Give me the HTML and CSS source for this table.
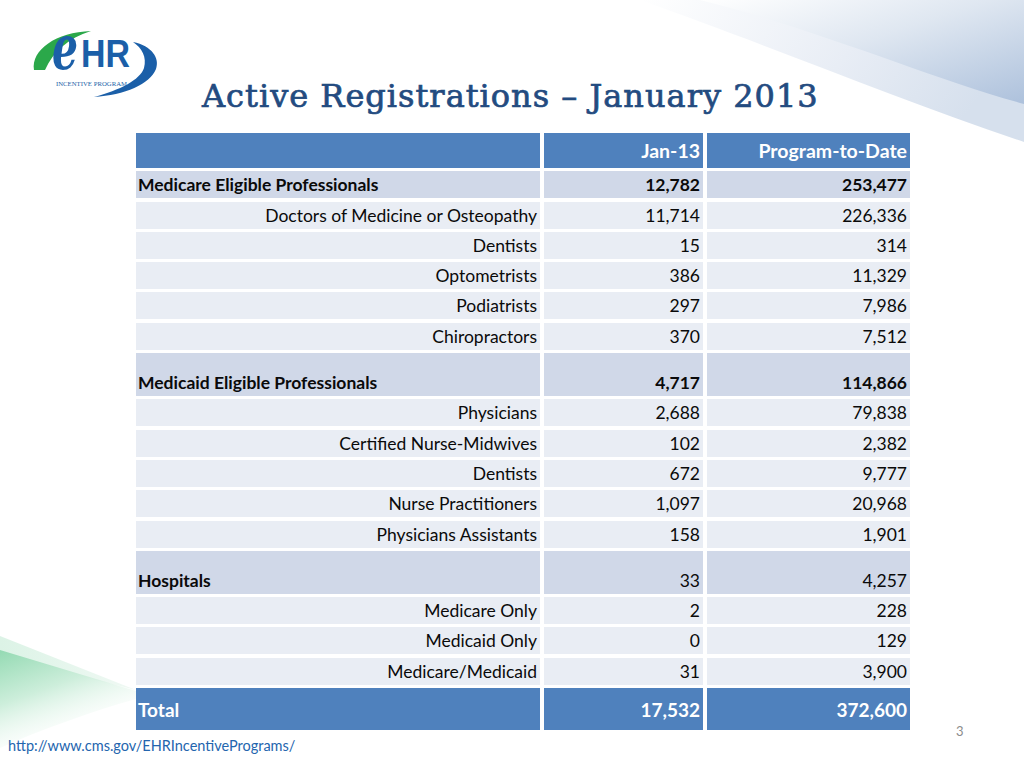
FILE: index.html
```html
<!DOCTYPE html>
<html lang="en">
<head>
<meta charset="utf-8">
<title>Active Registrations – January 2013</title>
<link rel="stylesheet" href="styles.css">
</head>
<body>
<div class="slide">
  <svg class="bg" width="1024" height="768" viewBox="0 0 1024 768" aria-hidden="true">
    <defs>
      <linearGradient id="sw1" x1="0" y1="0" x2="1" y2="0.3">
        <stop offset="0" stop-color="#ffffff"/>
        <stop offset="0.6" stop-color="#e8edf5"/>
        <stop offset="1" stop-color="#d6e0ed"/>
      </linearGradient>
      <linearGradient id="sw2" x1="0" y1="0" x2="1" y2="1">
        <stop offset="0" stop-color="#ffffff"/>
        <stop offset="0.45" stop-color="#dfe7f1"/>
        <stop offset="1" stop-color="#adc1dc"/>
      </linearGradient>
      <linearGradient id="gr1" x1="0" y1="0" x2="0.5" y2="1">
        <stop offset="0" stop-color="#94dab3"/>
        <stop offset="0.45" stop-color="#cdeedb"/>
        <stop offset="1" stop-color="#ffffff" stop-opacity="0"/>
      </linearGradient>
      <linearGradient id="gr2" x1="0" y1="0" x2="1" y2="0">
        <stop offset="0" stop-color="#dcf3e6"/>
        <stop offset="1" stop-color="#f0f9f4"/>
      </linearGradient>
    </defs>
    <path d="M640 0 C760 42 900 100 1024 142 L1024 0 Z" fill="url(#sw1)"/>
    <path d="M700 0 C820 30 930 78 1024 104 L1024 0 Z" fill="url(#sw2)"/>
    <path d="M0 636 L136 690 L0 656 Z" fill="url(#gr2)"/>
    <path d="M0 650 L136 691 L136 699 C90 712 40 730 0 748 Z" fill="url(#gr1)"/>
  </svg>

  <header class="top">
    <svg class="logo" width="140" height="106" viewBox="28 0 140 106" role="img" aria-label="eHR Incentive Program">
      <path d="M34 70 C31 50 56 32 91 31 C68 38 53 52 45 70 Z" fill="#2ba84a"/>
      <path d="M133 42 C152 46 160 58 156 69 C150 84 125 95 94 97 C120 90 140 80 144 68 C147 57 142 48 133 42 Z" fill="#1b5fa8"/>
      <text x="52" y="69" class="logo-e" textLength="26" lengthAdjust="spacingAndGlyphs">e</text>
      <text x="81" y="67" class="logo-hr" textLength="49" lengthAdjust="spacingAndGlyphs">HR</text>
      <text x="56" y="86" class="logo-sub" textLength="71" lengthAdjust="spacingAndGlyphs">INCENTIVE PROGRAM</text>
    </svg>
    <h1 class="title">Active Registrations – January 2013</h1>
  </header>

  <div class="body-row">
    <div class="grid">
      <div class="c hd"></div><div class="c hd num">Jan-13</div><div class="c hd num">Program-to-Date</div>

      <div class="c sec b">Medicare Eligible Professionals</div><div class="c sec num b">12,782</div><div class="c sec num b">253,477</div>
      <div class="c row sub">Doctors of Medicine or Osteopathy</div><div class="c row num">11,714</div><div class="c row num">226,336</div>
      <div class="c row sub">Dentists</div><div class="c row num">15</div><div class="c row num">314</div>
      <div class="c row sub">Optometrists</div><div class="c row num">386</div><div class="c row num">11,329</div>
      <div class="c row sub">Podiatrists</div><div class="c row num">297</div><div class="c row num">7,986</div>
      <div class="c row sub">Chiropractors</div><div class="c row num">370</div><div class="c row num">7,512</div>

      <div class="c sec b">Medicaid Eligible Professionals</div><div class="c sec num b">4,717</div><div class="c sec num b">114,866</div>
      <div class="c row sub">Physicians</div><div class="c row num">2,688</div><div class="c row num">79,838</div>
      <div class="c row sub">Certified Nurse-Midwives</div><div class="c row num">102</div><div class="c row num">2,382</div>
      <div class="c row sub">Dentists</div><div class="c row num">672</div><div class="c row num">9,777</div>
      <div class="c row sub">Nurse Practitioners</div><div class="c row num">1,097</div><div class="c row num">20,968</div>
      <div class="c row sub">Physicians Assistants</div><div class="c row num">158</div><div class="c row num">1,901</div>

      <div class="c sec b">Hospitals</div><div class="c sec num">33</div><div class="c sec num">4,257</div>
      <div class="c row sub">Medicare Only</div><div class="c row num">2</div><div class="c row num">228</div>
      <div class="c row sub">Medicaid Only</div><div class="c row num">0</div><div class="c row num">129</div>
      <div class="c row sub">Medicare/Medicaid</div><div class="c row num">31</div><div class="c row num">3,900</div>

      <div class="c tot">Total</div><div class="c tot num">17,532</div><div class="c tot num">372,600</div>
    </div>
    <div class="pagenum">3</div>
  </div>

  <footer class="url">http://www.cms.gov/EHRIncentivePrograms/</footer>
</div>
</body>
</html>
```
FILE: styles.css
```css
* { box-sizing: border-box; }
html, body { margin: 0; padding: 0; background: #ffffff; }
body { font-family: Lato, "Open Sans", "Liberation Sans", sans-serif; }

.slide {
  position: relative;
  width: 1024px;
  height: 768px;
  overflow: hidden;
  background: #ffffff;
}

.bg {
  position: absolute;
  left: 0;
  top: 0;
  z-index: 0;
}

.top, .body-row, .url { position: relative; z-index: 1; }

.top {
  height: 133px;
  display: flex;
  align-items: flex-start;
  padding-left: 28px;
}

.logo { margin-top: 0; flex: none; }
.logo-e { font-family: "DejaVu Serif", serif; font-style: italic; font-weight: 700; font-size: 62px; fill: #1b5fa8; }
.logo-hr { font-family: "Liberation Sans", Arial, sans-serif; font-weight: 700; font-size: 38px; fill: #1b5fa8; }
.logo-sub { font-family: "Liberation Serif", serif; font-size: 6px; fill: #1b5fa8; }

.title {
  margin: 76px 0 0 34px;
  font-family: "DejaVu Serif", serif;
  font-weight: 400;
  font-size: 32px;
  letter-spacing: 1px;
  line-height: 40px;
  color: #234b80;
  -webkit-text-stroke: 0.7px #234b80;
  white-space: nowrap;
}

.body-row {
  display: flex;
  align-items: flex-end;
  padding-left: 136px;
}

.grid {
  display: grid;
  grid-template-columns: 404px 159px 203px;
  grid-template-rows: 35px repeat(6, 27px) 43px repeat(5, 27px) 43px repeat(3, 27px) 42px;
  column-gap: 4px;
  row-gap: 3.3px;
  font-size: 17.5px;
  color: #0a0a0a;
}

.c {
  display: flex;
  align-items: flex-end;
  line-height: 27px;
  padding: 0 3px 0 2px;
  white-space: nowrap;
}
.num, .sub { justify-content: flex-end; }
.b { font-weight: 700; }

.hd {
  background: #4f81bd;
  color: #ffffff;
  font-weight: 700;
  align-items: center;
  font-size: 19.5px;
}
.sec { background: #d0d8e8; }
.row { background: #e9edf4; }
.tot {
  background: #4f81bd;
  color: #ffffff;
  font-weight: 700;
  align-items: center;
  font-size: 19px;
}

.pagenum {
  margin: 0 0 -9px 46px;
  font-family: Lato, "Liberation Sans", sans-serif;
  font-size: 13px;
  line-height: 16px;
  color: #8c8c8c;
}

.url {
  margin: 7px 0 0 8px;
  font-family: Lato, "Open Sans", "Liberation Sans", sans-serif;
  font-size: 14.5px;
  line-height: 18px;
  color: #2465ae;
}
```
